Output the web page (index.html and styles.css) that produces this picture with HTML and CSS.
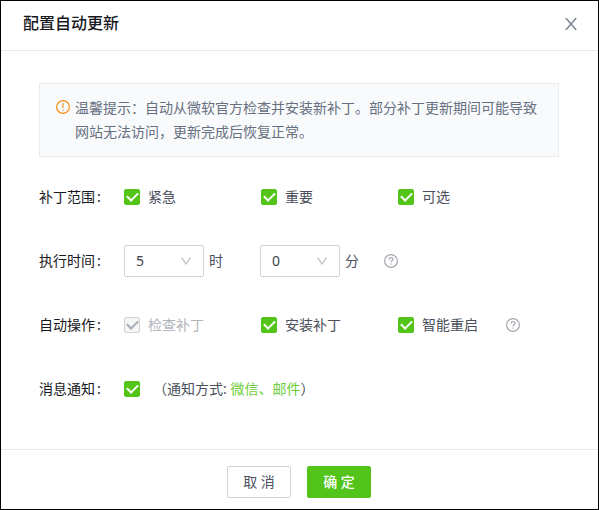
FILE: index.html
```html
<!doctype html>
<html lang="zh-CN">
<head>
    <meta charset="UTF-8">
    <meta content="width=device-width, initial-scale=1" name="viewport">
    <title>配置自动更新</title>
    <link rel="stylesheet" href="styles.css">
</head>
<body>
<form class="modal">
    <header class="modal-header">
        <h1 class="modal-title">配置自动更新</h1>
        <button class="close-button" type="button" aria-label="关闭">
            <svg width="12" height="12" viewBox="0 0 12 12">
                <path d="M.8 0l10.400 12M11.200 0l-10.400 12"/>
            </svg>
        </button>
    </header>

    <main class="modal-body">
        <div class="notice">
            <svg class="notice-icon" width="14" height="14" viewBox="0 0 14 14">
                <circle cx="7" cy="7" r="6.4"/>
                <path d="M7 3.200v4.600M7 9.400v1.400"/>
            </svg>
            <p>温馨提示：自动从微软官方检查并安装新补丁。部分补丁更新期间可能导致网站无法访问，更新完成后恢复正常。</p>
        </div>

        <div class="form-row">
            <span class="form-label">补丁范围</span>
            <label class="option"><input type="checkbox" checked>紧急</label>
            <label class="option"><input type="checkbox" checked>重要</label>
            <label class="option"><input type="checkbox" checked>可选</label>
        </div>

        <div class="form-row">
            <span class="form-label">执行时间</span>
            <div class="time">
                <div class="select">
                    <select id="hour">
                        <option>5</option>
                    </select>
                    <svg width="10" height="8" viewBox="0 0 10 8"><path d="M.5 .5L5 7L9.500 .5"/></svg>
                </div>
                <label for="hour">时</label>
            </div>
            <div class="time">
                <div class="select">
                    <select id="minute">
                        <option>0</option>
                    </select>
                    <svg width="10" height="8" viewBox="0 0 10 8"><path d="M.5 .5L5 7L9.500 .5"/></svg>
                </div>
                <label for="minute">分</label>
            </div>
            <svg class="help help-time" width="14" height="14" viewBox="0 0 14 14">
                <circle cx="7" cy="7" r="6.4"/>
                <path d="M5 5.600c0-1.200.8-1.900 2-1.900s2 .7 2 1.700c0 1.500-2 1.400-2 2.900M7 9.400v1.200"/>
            </svg>
        </div>

        <div class="form-row">
            <span class="form-label">自动操作</span>
            <label class="option disabled"><input type="checkbox" checked disabled>检查补丁</label>
            <label class="option"><input type="checkbox" checked>安装补丁</label>
            <label class="option last"><input type="checkbox" checked>智能重启</label>
            <svg class="help" width="14" height="14" viewBox="0 0 14 14">
                <circle cx="7" cy="7" r="6.4"/>
                <path d="M5 5.600c0-1.200.8-1.900 2-1.900s2 .7 2 1.700c0 1.500-2 1.400-2 2.900M7 9.400v1.200"/>
            </svg>
        </div>

        <div class="form-row">
            <label class="form-label" for="notify">消息通知</label>
            <input id="notify" type="checkbox" checked>
            <span class="notify-way">（通知方式: <a href="#">微信、邮件</a>）</span>
        </div>
    </main>

    <footer class="modal-footer">
        <button class="button" type="button">取 消</button>
        <button class="button primary" type="submit">确 定</button>
    </footer>
</form>
</body>
</html>
```

FILE: styles.css
```css
* {
    box-sizing: border-box;
}

body {
    margin: 0;
    font: 14px/24px "Noto Sans", "Noto Sans CJK SC", sans-serif;
    color: #4b505c;
    background: #fff;
}

svg {
    flex: none;
    fill: none;
    stroke: currentColor;
    stroke-width: 1.2;
}

.modal {
    display: flex;
    flex-direction: column;
    min-height: 100vh;
    border: 1px solid #000;
}

.modal-header {
    display: flex;
    align-items: center;
    justify-content: space-between;
    padding: 10px 21px 15px 22px;
    border-bottom: 1px solid #e6e8eb;
}

.modal-title {
    margin: 0;
    font-size: 16px;
    font-weight: 500;
    color: #16181d;
}

.close-button {
    display: flex;
    padding: 2px 0 0;
    border: none;
    background: transparent;
    color: #7d8590;
    cursor: pointer;
}

.close-button svg {
    stroke-width: 1.5;
}

.modal-body {
    flex: 1;
    padding: 32px 39px 12px 38px;
}

.notice {
    display: flex;
    gap: 5px;
    margin-bottom: 24px;
    padding: 12px 16px;
    border: 1px solid #e9eef2;
    background: #f9fafc;
    color: #667080;
}

.notice p {
    margin: 0;
}

.notice-icon {
    margin-top: 4px;
    color: #fa8c16;
}

.form-row {
    display: flex;
    align-items: center;
    height: 32px;
    margin-bottom: 32px;
}

.form-label {
    width: 85px;
    color: #16181d;
}

.form-label::after {
    content: ':';
    margin-left: 2px;
}

.option {
    display: flex;
    align-items: center;
    gap: 8px;
    width: 137px;
}

.option.last {
    width: 108px;
}

.option.disabled {
    color: #b1b5bc;
}

input[type="checkbox"] {
    flex: none;
    appearance: none;
    display: grid;
    place-items: center;
    width: 16px;
    height: 16px;
    margin: 0;
    border: 1px solid #52c41a;
    border-radius: 2px;
    background: #52c41a;
    color: #fff;
}

input[type="checkbox"]:checked::before {
    content: '';
    width: 9px;
    height: 5px;
    margin-bottom: 3px;
    border: solid currentColor;
    border-width: 0 0 2px 2px;
    transform: rotate(-45deg);
}

input[type="checkbox"]:disabled {
    border-color: #d0d4da;
    background: #f5f5f5;
    color: #a5abb3;
}

.time {
    display: flex;
    align-items: center;
    gap: 5px;
    width: 136px;
}

.select {
    display: grid;
    align-items: center;
    width: 80px;
}

.select select {
    grid-area: 1 / 1;
    appearance: none;
    height: 32px;
    padding: 0 11px;
    border: 1px solid #d0d3da;
    border-radius: 2px;
    background: #fff;
    font: inherit;
    color: #3e434e;
}

.select svg {
    grid-area: 1 / 1;
    justify-self: end;
    margin-right: 13px;
    color: #b4b9c0;
    pointer-events: none;
}

.help {
    color: #a5a9b0;
}

.help-time {
    margin-left: -12px;
}

.notify-way {
    margin-left: 13px;
}

.notify-way a {
    color: #6fce40;
    text-decoration: none;
}

.modal-footer {
    display: flex;
    justify-content: center;
    gap: 16px;
    padding: 16px 17px 11px 16px;
    border-top: 1px solid #e6e8eb;
}

.button {
    width: 64px;
    height: 32px;
    padding: 0;
    border: 1px solid #d0d3da;
    border-radius: 2px;
    background: #fff;
    font: inherit;
    color: #4b505c;
    cursor: pointer;
}

.button.primary {
    border-color: #52c41a;
    background: #52c41a;
    color: #fff;
    font-weight: 500;
}
```
